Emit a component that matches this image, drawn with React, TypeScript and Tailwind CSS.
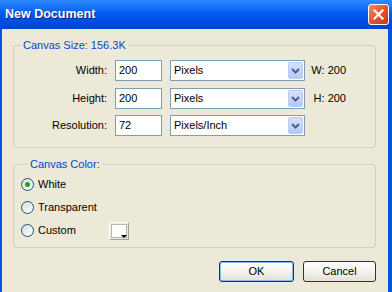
import React from "react";

const font = { fontFamily: '"Liberation Sans", Arial, sans-serif' };

function Chevron() {
  return (
    <svg width="9" height="6" viewBox="0 0 9 6">
      <path d="M1 1 L4.5 4.5 L8 1" stroke="#4D6185" strokeWidth="2" fill="none" />
    </svg>
  );
}

function Select({ value }: { value: string }) {
  return (
    <div className="flex h-[21px] w-[135px] items-center border border-[#7F9DB9] bg-white">
      <span className="flex-1 pl-[3px] text-[11px] text-black">{value}</span>
      <div className="mr-[1px] flex h-[17px] w-[15px] items-center justify-center rounded-[2px] border border-[#B9CBF3] bg-gradient-to-b from-[#D6E2FD] to-[#B4C8F6]">
        <Chevron />
      </div>
    </div>
  );
}

function Row({ label, value, unit, info }: { label: string; value: string; unit: string; info?: string }) {
  return (
    <div className="flex h-[21px] items-center">
      <span className="w-[93px] text-right text-[11px] text-black">{label}</span>
      <div className="ml-[8px] flex h-[21px] w-[47px] items-center border border-[#7F9DB9] bg-white pl-[3px] text-[11px] text-black">
        {value}
      </div>
      <div className="ml-[8px]">
        <Select value={unit} />
      </div>
      <span className="ml-[6px] w-[35px] text-right text-[11px] text-black">{info}</span>
    </div>
  );
}

function Radio({ checked, label }: { checked?: boolean; label: string }) {
  return (
    <div className="flex h-[13px] items-center">
      <div className="flex h-[13px] w-[13px] items-center justify-center rounded-full border border-[#1C5180] bg-gradient-to-br from-[#DCDCD7] to-white">
        {checked && <div className="h-[5px] w-[5px] rounded-full bg-[#21A121]" />}
      </div>
      <span className="ml-[4px] text-[11px] text-black">{label}</span>
    </div>
  );
}

function XPButton({ label, def }: { label: string; def?: boolean }) {
  return (
    <div
      className={`flex h-[21px] items-center justify-center rounded-[3px] border border-[#003C74] bg-gradient-to-b from-white via-[#F4F3EE] to-[#E3E0D5] text-[11px] text-black ${
        def ? "shadow-[inset_0_0_0_1px_#8CB4F2]" : ""
      }`}
      style={{ width: def ? 75 : 73 }}
    >
      {label}
    </div>
  );
}

export default function App() {
  return (
    <div className="h-[292px] w-[392px] overflow-hidden bg-[#0055E5]" style={font}>
      <div className="flex h-[29px] items-center bg-gradient-to-b from-[#2E8BFF] via-[#0058EE] to-[#0043D3] pl-[5px] pr-[3px]">
        <span className="flex-1 text-[12.5px] font-bold text-white [text-shadow:1px_1px_0_#0A1E8C]">New Document</span>
        <div className="flex h-[21px] w-[21px] items-center justify-center rounded-[3px] border border-white bg-gradient-to-br from-[#EE8A6A] via-[#E0552E] to-[#C6391A]">
          <svg width="11" height="11" viewBox="0 0 11 11">
            <path d="M1.5 1.5 L9.5 9.5 M9.5 1.5 L1.5 9.5" stroke="white" strokeWidth="2.2" strokeLinecap="square" />
          </svg>
        </div>
      </div>
      <div className="ml-[2px] mr-[4px] h-[263px] bg-[#ECE9D8] pl-[11px] pr-[12px] pt-[10px]">
        <fieldset className="rounded-[3px] border border-[#D0D0BF] pb-[11px] pt-[8px]">
          <legend className="ml-[7px] px-[2px] text-[11px] leading-[13px] text-[#0046D5]">Canvas Size: 156.3K</legend>
          <div className="flex flex-col">
            <Row label="Width:" value="200" unit="Pixels" info="W: 200" />
            <div className="mt-[7px]">
              <Row label="Height:" value="200" unit="Pixels" info="H: 200" />
            </div>
            <div className="mt-[6px]">
              <Row label="Resolution:" value="72" unit="Pixels/Inch" />
            </div>
          </div>
        </fieldset>
        <fieldset className="mt-[10px] rounded-[3px] border border-[#D0D0BF] pb-[10px] pl-[7px] pt-[7px]">
          <legend className="ml-[7px] px-[2px] text-[11px] leading-[13px] text-[#0046D5]">Canvas Color:</legend>
          <div className="flex flex-col gap-[10px]">
            <Radio checked label="White" />
            <Radio label="Transparent" />
            <div className="flex h-[13px] items-center">
              <div className="w-[88px]">
                <Radio label="Custom" />
              </div>
              <div className="relative h-[18px] w-[20px] border border-t-white border-l-white border-b-[#A0A0A0] border-r-[#A0A0A0] bg-[#ECE9D8] p-[1px]">
                <div className="h-full w-full border border-[#B8B8B0] bg-white" />
                <div className="absolute bottom-[1px] right-[1px] h-0 w-0 border-l-[3px] border-r-[3px] border-t-[3px] border-l-transparent border-r-transparent border-t-black" />
              </div>
            </div>
          </div>
        </fieldset>
        <div className="mt-[13px] flex justify-end gap-[9px]">
          <XPButton label="OK" def />
          <XPButton label="Cancel" />
        </div>
      </div>
    </div>
  );
}
